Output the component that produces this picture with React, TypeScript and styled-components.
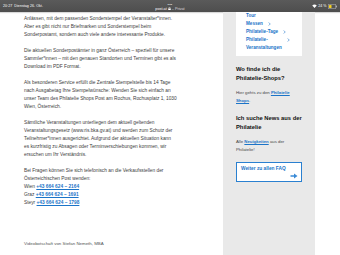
import styled, { createGlobalStyle } from "styled-components";

const GlobalStyle = createGlobalStyle`
  html, body {
    margin: 0;
    padding: 0;
    background: #ffffff;
  }
  body {
    font-family: "Liberation Sans", Arial, sans-serif;
    overflow: hidden;
  }
`;

const Screen = styled.div`
  width: 340px;
  height: 255px;
  display: flex;
  flex-direction: column;
  overflow: hidden;
`;

// iOS Statusleiste oben
const StatusBar = styled.div`
  height: 12px;
  flex-shrink: 0;
  background: linear-gradient(#5a5a5a, #4e4e4e);
  color: #ffffff;
  display: grid;
  grid-template-columns: 1fr auto 1fr;
  align-items: center;
  padding: 0 3px;
  font-size: 3.6px;
  box-shadow: 0 1px 1px rgba(0, 0, 0, 0.15);
`;

const StatusLeft = styled.span`
  letter-spacing: 0.05px;
`;

const UrlBox = styled.div`
  display: flex;
  flex-direction: column;
  align-items: center;
  line-height: 4px;
  padding-top: 1px;
`;

const Dots = styled.span`
  font-size: 4px;
  letter-spacing: 0.3px;
  opacity: 0.8;
`;

const Url = styled.span`
  font-size: 3.8px;
  display: flex;
  align-items: center;
  gap: 1px;
  span {
    opacity: 0.75;
  }
`;

const StatusRight = styled.div`
  justify-self: end;
  display: flex;
  align-items: center;
  gap: 1.5px;
`;

const Main = styled.div`
  flex: 1;
  display: flex;
  align-items: stretch;
  padding-left: 24px;
  gap: 27px;
`;

const Article = styled.div`
  width: 172px;
  padding-top: 3px;
  font-size: 4.8px;
  line-height: 8px;
  color: #3c3c3c;
`;

const Para = styled.p`
  margin: 0 0 8px;
  white-space: nowrap;
`;

const PhoneLink = styled.a`
  color: #1b74c8;
  font-weight: 700;
  text-decoration: underline;
  text-decoration-thickness: 0.5px;
  text-underline-offset: 1px;
`;

const Caption = styled.div`
  margin-top: 33px;
  font-size: 4.4px;
  color: #555555;
`;

const Sidebar = styled.aside`
  width: 92px;
  background: #e9e9e9;
  padding: 0 13px;
  box-sizing: border-box;
  display: flex;
  flex-direction: column;
`;

const NavBox = styled.ul`
  list-style: none;
  margin: 0;
  background: #ffffff;
  padding: 0 0 5px 10px;
`;

const NavItem = styled.li`
  color: #1b74c8;
  font-size: 4.6px;
  font-weight: 700;
  line-height: 8px;
  display: flex;
  align-items: flex-start;
  gap: 5px;
`;

const NavLabel = styled.span<{ $wrap?: boolean }>`
  line-height: ${(p) => (p.$wrap ? "7.5px" : "8px")};
`;

const ChevronWrap = styled.span`
  display: flex;
  height: 8px;
  align-items: center;
`;

const Heading = styled.h3`
  margin: 9px 0 0;
  font-size: 5.8px;
  line-height: 8.5px;
  font-weight: 700;
  color: #111111;
`;

const SideText = styled.p`
  margin: 7px 0 0;
  font-size: 4.3px;
  line-height: 8px;
  color: #444444;
`;

const SideLink = styled.a`
  color: #1b74c8;
  font-weight: 700;
  text-decoration: underline;
  text-decoration-thickness: 0.5px;
`;

const FaqButton = styled.button`
  margin-top: 8px;
  height: 20px;
  background: #ffffff;
  border: 1px solid #2a80d0;
  padding: 2px 3px 2px 4px;
  display: flex;
  flex-direction: column;
  align-items: stretch;
  text-align: left;
  font-family: inherit;
  cursor: pointer;
`;

const FaqLabel = styled.span`
  color: #1b74c8;
  font-size: 4.8px;
  font-weight: 700;
  line-height: 7px;
`;

const ArrowWrap = styled.span`
  align-self: flex-end;
  display: flex;
  margin-top: 1px;
`;

function Wifi() {
  return (
    <svg width="5" height="4" viewBox="0 0 10 8">
      <path d="M5 8 L0.5 3 A7 7 0 0 1 9.5 3 Z" fill="#ffffff" />
    </svg>
  );
}

function Battery() {
  return (
    <svg width="9" height="5" viewBox="0 0 18 10">
      <rect x="0.5" y="0.5" width="15" height="9" rx="2" fill="none" stroke="#dddddd" />
      <rect x="2" y="2" width="5" height="6" rx="1" fill="#f5d020" />
      <rect x="16.2" y="3.5" width="1.3" height="3" fill="#dddddd" />
    </svg>
  );
}

function Lock() {
  return (
    <svg width="3" height="3.5" viewBox="0 0 6 7">
      <rect x="0.5" y="3" width="5" height="4" fill="#ffffff" />
      <path d="M1.5 3 V2 A1.5 1.5 0 0 1 4.5 2 V3" stroke="#ffffff" fill="none" />
    </svg>
  );
}

function Chevron() {
  return (
    <ChevronWrap>
      <svg width="3" height="4" viewBox="0 0 6 8">
        <path d="M1.5 1 L4.5 4 L1.5 7" stroke="#1b74c8" strokeWidth="1.2" fill="none" />
      </svg>
    </ChevronWrap>
  );
}

function Arrow() {
  return (
    <svg width="8" height="6" viewBox="0 0 16 12">
      <path d="M1 4.5 H8 V1 L15 6 L8 11 V7.5 H1 Z" fill="#3a8ad6" />
    </svg>
  );
}

const phones = [
  { city: "Wien", number: "+43 664 624 – 2164" },
  { city: "Graz", number: "+43 664 624 – 1691" },
  { city: "Steyr", number: "+43 664 624 – 1798" },
];

export default function App() {
  return (
    <Screen>
      <GlobalStyle />
      <StatusBar>
        <StatusLeft>20:27&nbsp; Dienstag 26. Okt.</StatusLeft>
        <UrlBox>
          <Dots>•••</Dots>
          <Url>
            post.at <Lock /> <span>– Privat</span>
          </Url>
        </UrlBox>
        <StatusRight>
          <Wifi />
          <span>24 %</span>
          <Battery />
        </StatusRight>
      </StatusBar>

      <Main>
        <Article>
          <Para>
            Anlässen, mit dem passenden Sonderstempel der Veranstalter*innen.
            <br />
            Aber es gibt nicht nur Briefmarken und Sonderstempel beim
            <br />
            Sonderpostamt, sondern auch viele andere interessante Produkte.
          </Para>
          <Para>
            Die aktuellen Sonderpostämter in ganz Österreich – speziell für unsere
            <br />
            Sammler*innen – mit den genauen Standorten und Terminen gibt es als
            <br />
            Download im PDF Format.
          </Para>
          <Para>
            Als besonderen Service erfüllt die Zentrale Stempelstelle bis 14 Tage
            <br />
            nach Ausgabetag Ihre Stempelwünsche: Wenden Sie sich einfach an
            <br />
            unser Team des Philatelie Shops Post am Rochus, Rochusplatz 1, 1030
            <br />
            Wien, Österreich.
          </Para>
          <Para>
            Sämtliche Veranstaltungen unterliegen dem aktuell geltenden
            <br />
            Veranstaltungsgesetz (www.ris.bka.gv.at) und werden zum Schutz der
            <br />
            Teilnehmer*innen ausgerichtet. Aufgrund der aktuellen Situation kann
            <br />
            es kurzfristig zu Absagen oder Terminverschiebungen kommen, wir
            <br />
            ersuchen um Ihr Verständnis.
          </Para>
          <Para>
            Bei Fragen können Sie sich telefonisch an die Verkaufsstellen der
            <br />
            Österreichischen Post wenden:
            {phones.map((p) => (
              <span key={p.city}>
                <br />
                {p.city} <PhoneLink href="#">{p.number}</PhoneLink>
              </span>
            ))}
          </Para>
          <Caption>Videobotschaft von Stefan Nemeth, MBA</Caption>
        </Article>

        <Sidebar>
          <NavBox>
            <NavItem>
              <NavLabel>Tour</NavLabel>
            </NavItem>
            <NavItem>
              <NavLabel>Messen</NavLabel>
              <Chevron />
            </NavItem>
            <NavItem>
              <NavLabel>Philatelie-Tage</NavLabel>
              <Chevron />
            </NavItem>
            <NavItem>
              <NavLabel $wrap>
                Philatelie-
                <br />
                Veranstaltungen
              </NavLabel>
              <Chevron />
            </NavItem>
          </NavBox>

          <Heading>
            Wo finde ich die
            <br />
            Philatelie-Shops?
          </Heading>
          <SideText>
            Hier gehts zu den <SideLink href="#">Philatelie</SideLink>
            <br />
            <SideLink href="#">Shops</SideLink>.
          </SideText>

          <Heading>
            Ich suche News aus der
            <br />
            Philatelie
          </Heading>
          <SideText>
            Alle <SideLink href="#">Neuigkeiten</SideLink> aus der
            <br />
            Philatelie!
          </SideText>

          <FaqButton>
            <FaqLabel>Weiter zu allen FAQ</FaqLabel>
            <ArrowWrap>
              <Arrow />
            </ArrowWrap>
          </FaqButton>
        </Sidebar>
      </Main>
    </Screen>
  );
}
